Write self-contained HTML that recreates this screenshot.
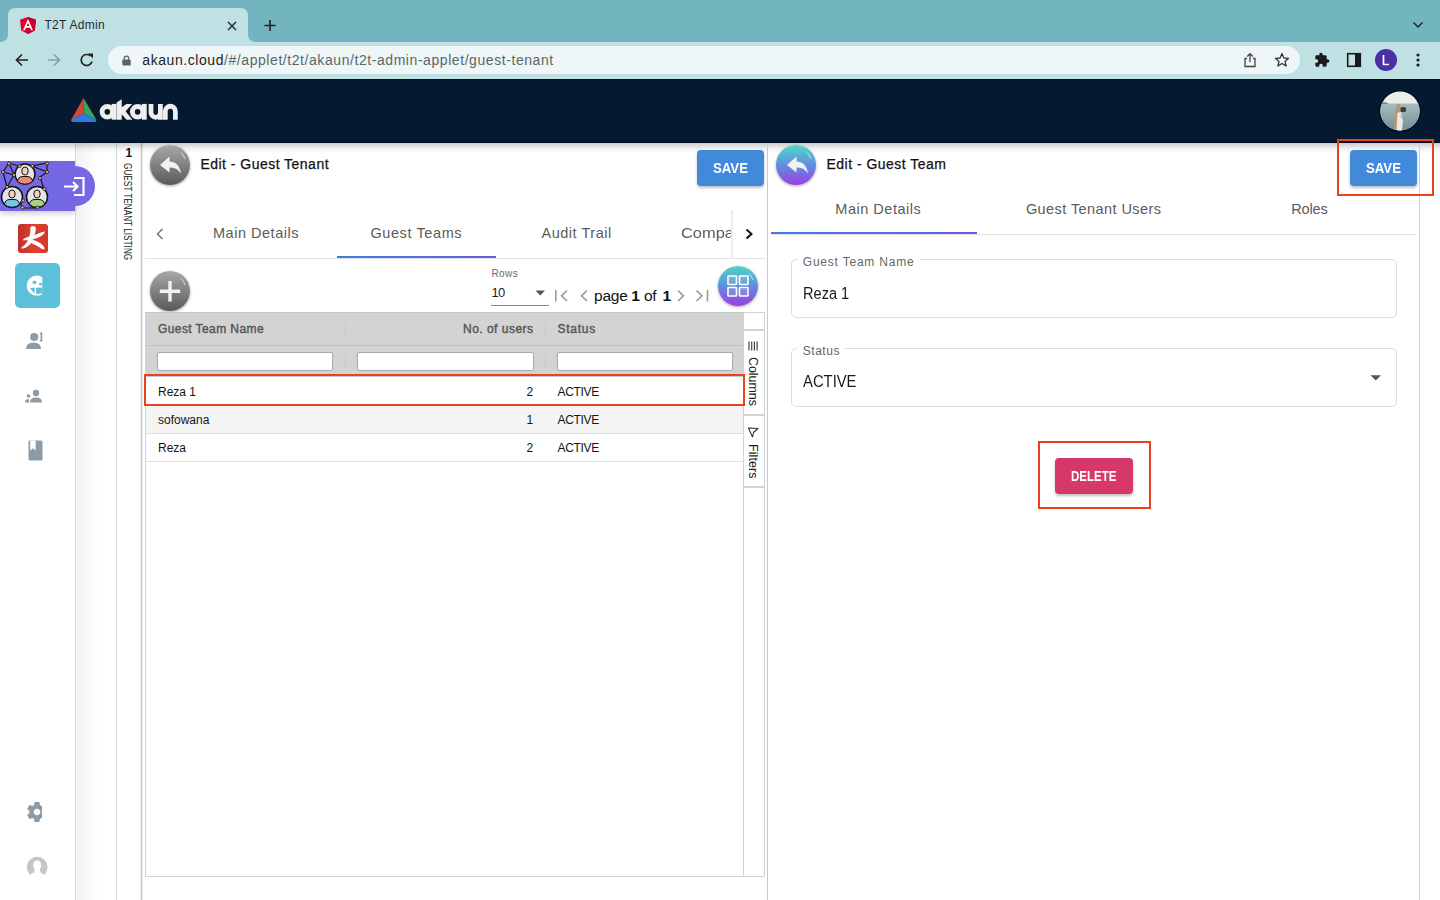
<!DOCTYPE html>
<html><head><meta charset="utf-8"><style>
*{box-sizing:border-box;margin:0;padding:0}
html,body{width:1440px;height:900px;overflow:hidden;background:#fff;font-family:"Liberation Sans",sans-serif;position:relative}
.a{position:absolute}
.t{position:absolute;white-space:nowrap;line-height:1}
svg{position:absolute;overflow:visible}
</style></head><body>
<div class="a" style="left:0;top:0;width:1440px;height:42px;background:#73b5be"></div>
<svg style="left:0;top:0" width="270" height="42"><path d="M0 42 Q8 42 8 34 L8 16 Q8 8 16 8 L240 8 Q248 8 248 16 L248 34 Q248 42 256 42 Z" fill="#bfe1e4"/></svg>
<div class="a" style="left:0;top:42px;width:1440px;height:37px;background:#bfe1e4"></div>
<svg style="left:20px;top:17px" width="16" height="17" viewBox="0 0 250 265"><path d="M125 0 L0 44 L19 209 L125 265 L231 209 L250 44 Z" fill="#dd0031"/><path d="M125 0 L125 265 L231 209 L250 44 Z" fill="#c3002f"/><path d="M125 30 L47 205 L76 205 L92 166 L158 166 L174 205 L203 205 Z M125 92 L148 142 L102 142 Z" fill="#fff"/></svg>
<div class="t" style="left:44.40px;top:19.14px;font-size:12px;color:#1f2a2c;letter-spacing:0.311px;">T2T Admin</div>

<svg style="left:227px;top:21px" width="10" height="10"><path d="M1 1 L9 9 M9 1 L1 9" stroke="#222" stroke-width="1.4"/></svg>
<svg style="left:263px;top:19px" width="14" height="13"><path d="M7 1 V12 M1.5 6.5 H12.5" stroke="#222" stroke-width="1.6"/></svg>
<svg style="left:1412px;top:21px" width="12" height="8"><path d="M1.5 1.5 L6 6 L10.5 1.5" stroke="#222" stroke-width="1.5" fill="none"/></svg>
<svg style="left:14px;top:52px" width="16" height="16"><path d="M14 8 H3 M8 2.5 L2.5 8 L8 13.5" stroke="#222" stroke-width="1.7" fill="none"/></svg>
<svg style="left:46px;top:52px" width="16" height="16"><path d="M2 8 H13 M8 2.5 L13.5 8 L8 13.5" stroke="#84a0a4" stroke-width="1.7" fill="none"/></svg>
<svg style="left:79px;top:52px" width="16" height="16"><path d="M13 9.5 A5.5 5.5 0 1 1 11.5 4" stroke="#222" stroke-width="1.7" fill="none"/><path d="M9 1.5 L14 1.5 L14 6.5 Z" fill="#222"/></svg>
<div class="a" style="left:108px;top:46px;width:1192px;height:28px;background:#eef6f7;border-radius:14px"></div>
<svg style="left:122px;top:55px" width="9" height="11"><path d="M2.3 4.8 V3.3 A2.2 2.2 0 0 1 6.7 3.3 V4.8" stroke="#5f6368" stroke-width="1.3" fill="none"/><rect x="0.3" y="4.6" width="8.4" height="6" rx="1" fill="#5f6368"/></svg>
<div class="t" style="left:142.3px;top:53.25px;font-size:14px;letter-spacing:0.566px"><span style="color:#1d2426">akaun.cloud</span><span style="color:#5c6668">/#/applet/t2t/akaun/t2t-admin-applet/guest-tenant</span></div>
<svg style="left:1243px;top:52px" width="14" height="16"><path d="M4 6.5 H2 V14.5 H12 V6.5 H10" stroke="#444" stroke-width="1.3" fill="none"/><path d="M7 10 V1.8 M4.2 4.5 L7 1.7 L9.8 4.5" stroke="#444" stroke-width="1.3" fill="none"/></svg>
<svg style="left:1274px;top:52px" width="16" height="16"><path d="M8 1.5 L9.9 6 L14.6 6.3 L11 9.4 L12.1 14 L8 11.5 L3.9 14 L5 9.4 L1.4 6.3 L6.1 6 Z" stroke="#333" stroke-width="1.3" fill="none" stroke-linejoin="round"/></svg>
<svg style="left:1314px;top:52px" width="16" height="16" viewBox="0 0 24 24"><path d="M20.5 11H19V7c0-1.1-.9-2-2-2h-4V3.5C13 2.12 11.88 1 10.5 1S8 2.12 8 3.5V5H4c-1.1 0-1.99.9-1.99 2v3.8H3.5c1.49 0 2.7 1.21 2.7 2.7s-1.21 2.7-2.7 2.7H2V20c0 1.1.9 2 2 2h3.8v-1.5c0-1.49 1.21-2.7 2.7-2.7 1.49 0 2.7 1.21 2.7 2.7V22H17c1.1 0 2-.9 2-2v-4h1.5c1.38 0 2.5-1.12 2.5-2.5S21.88 11 20.5 11z" fill="#1a1a1a"/></svg>
<svg style="left:1346px;top:52px" width="16" height="16"><rect x="1.7" y="1.7" width="12.6" height="12.6" stroke="#1a1a1a" stroke-width="1.6" fill="none"/><rect x="9" y="1.7" width="5.3" height="12.6" fill="#1a1a1a"/></svg>
<div class="a" style="left:1375px;top:49px;width:22px;height:22px;border-radius:50%;background:#4a2fa6"></div>
<svg style="left:1375px;top:49px" width="22" height="22"><path d="M8.5 6 V15.5 H14" stroke="#fff" stroke-width="1.7" fill="none"/></svg>
<svg style="left:1415px;top:52px" width="6" height="16"><circle cx="3" cy="3" r="1.6" fill="#1a1a1a"/><circle cx="3" cy="8" r="1.6" fill="#1a1a1a"/><circle cx="3" cy="13" r="1.6" fill="#1a1a1a"/></svg>
<div class="a" style="left:0;top:79px;width:1440px;height:64px;background:#051a31;border-top:1px solid #010d28;border-bottom:1px solid #000b26"></div>
<svg style="left:70px;top:97px" width="28" height="26" viewBox="0 0 28 26"><path d="M13.5 1 L13.5 16.5 L1 23 Z" fill="#d24a35"/><path d="M13.5 1 L26.5 23 L13.5 16.5 Z" fill="#3fa25a"/><path d="M1 23 L13.5 16.5 L26.5 23 Q26.5 25 24.5 25 L3 25 Q1 25 1 23 Z" fill="#2f7ae5"/></svg>
<svg style="left:96px;top:94px;filter:drop-shadow(0.8px 0.8px 0 #000)" width="90" height="32" viewBox="0 0 90 32"><g fill="none" stroke="#eeeeee"><ellipse cx="11.3" cy="17.8" rx="5.2" ry="5.3" stroke-width="4.9"/><path d="M18.1 9.9 V25.7" stroke-width="4.9"/><ellipse cx="41.6" cy="17.8" rx="5.2" ry="5.3" stroke-width="4.9"/><path d="M48.3 9.9 V25.7" stroke-width="4.9"/><path d="M55.0 9.9 V18.6 A4.7 4.7 0 0 0 64.4 18.6 M64.4 9.9 V25.7" stroke-width="4.8"/><path d="M69.3 25.7 V17.3 A5.05 5.05 0 0 1 79.4 17.3 V25.7" stroke-width="4.8"/></g><path d="M20.65 8.6 L25.75 5.2 L25.75 25.7 L20.65 25.7 Z M25.7 13.2 L30.4 9.9 L36.2 9.9 L29.6 17.2 L36.4 25.7 L30.6 25.7 L25.7 20.6 Z" fill="#eeeeee"/></svg>
<div class="a" style="left:1379px;top:90px;width:42px;height:42px;border-radius:50%;background:#02101e"></div>
<svg style="left:1380px;top:91px" width="40" height="40" viewBox="0 0 40 40"><defs><clipPath id="av"><circle cx="20" cy="20" r="19.6"/></clipPath><linearGradient id="sea" x1="0" y1="0" x2="0" y2="1"><stop offset="0" stop-color="#a9bcbd"/><stop offset="1" stop-color="#6f8f92"/></linearGradient></defs><g clip-path="url(#av)"><rect width="40" height="40" fill="#eceee9"/><rect y="12.5" width="40" height="28" fill="url(#sea)"/><path d="M0 12.5 Q4 10.5 9 12.5 Z" fill="#2e3a36"/><path d="M15.5 17 Q16 12.5 19.5 12.8 Q21 14 20.5 18 L19 40 L14.5 40 Q13.5 30 15.5 17Z" fill="#b49a72"/><path d="M17.5 22 L21 21 L23 30 L22 40 L16.5 40 Z" fill="#e9e8e2"/><rect x="20.5" y="16" width="5.5" height="5" rx="1.5" fill="#3b4244"/><path d="M21 21 Q23.5 22 22.5 27 L20.5 27Z" fill="#d8b79a"/></g></svg>
<div class="a" style="left:76px;top:143px;width:40px;height:757px;background:linear-gradient(90deg,#f3f3f3,#fafafa 35%,#fff 58%)"></div>
<div class="a" style="left:75px;top:143px;width:1px;height:757px;background:#dcdcdc"></div>
<div class="a" style="left:116px;top:143px;width:1px;height:757px;background:#d8d8d8"></div>
<div class="a" style="left:140px;top:143px;width:3px;height:757px;background:linear-gradient(90deg,#f2f2f2 0,#f2f2f2 33%,#c8c8c8 33%,#c8c8c8 66%,#e8e8e8 66%)"></div>
<div class="a" style="left:0;top:143px;width:1440px;height:10px;background:linear-gradient(rgba(0,0,0,0.20),rgba(0,0,0,0.05) 60%,rgba(0,0,0,0))"></div>
<div class="a" style="left:0;top:161px;width:75px;height:50px;background:#7468e4;box-shadow:0 3px 5px rgba(0,0,0,0.18)"></div>
<div class="a" style="left:55px;top:166px;width:40px;height:40px;border-radius:50%;background:#7468e4"></div>
<svg style="left:60px;top:172px" width="28" height="28"><path d="M14 6 H23.5 V23 H14" stroke="#fff" stroke-width="2.2" fill="none"/><path d="M4 14.5 H17.5 M13 10 L17.5 14.5 L13 19" stroke="#fff" stroke-width="2.2" fill="none"/></svg>
<svg style="left:0;top:161px" width="50" height="50" viewBox="0 0 50 50">
<g stroke="#111" stroke-width="1.1" fill="none">
<path d="M9 2 L3 11 L14 14 L9 2 L19 5 M3 11 L7 26 L14 14 M32 5 L47 2 L47 11 L32 5 M47 11 L40 16 L44 28 M22 47 L37 47 M22 47 L20 40"/>
</g>
<circle cx="25" cy="13" r="10" fill="#e4e4e8" stroke="#111" stroke-width="1.5"/>
<path d="M17.5 20.5 Q18 15.5 23 15.5 L27 15.5 Q32 15.5 32.5 20.5 Q29.5 23.2 25 23.2 Q20.5 23.2 17.5 20.5Z" fill="#ef8a72" stroke="#111" stroke-width="1"/>
<ellipse cx="25" cy="10" rx="3.2" ry="4" fill="#f2d2b6" stroke="#111" stroke-width="1"/>
<circle cx="12" cy="36" r="10.5" fill="#e4e4e8" stroke="#111" stroke-width="1.5"/>
<path d="M4.5 43.5 Q5 38.5 10 38.5 L14 38.5 Q19 38.5 19.5 43.5 Q16.5 46.3 12 46.3 Q7.5 46.3 4.5 43.5Z" fill="#6fc8ea" stroke="#111" stroke-width="1"/>
<ellipse cx="12" cy="33" rx="3.2" ry="4" fill="#f2d2b6" stroke="#111" stroke-width="1"/>
<circle cx="37" cy="36" r="10.5" fill="#e4e4e8" stroke="#111" stroke-width="1.5"/>
<path d="M29.5 43.5 Q30 38.5 35 38.5 L39 38.5 Q44 38.5 44.5 43.5 Q41.5 46.3 37 46.3 Q32.5 46.3 29.5 43.5Z" fill="#a6d47d" stroke="#111" stroke-width="1"/>
<ellipse cx="37" cy="33" rx="3.2" ry="4" fill="#f2d2b6" stroke="#111" stroke-width="1"/>
<g fill="#d9b35a" stroke="#111" stroke-width="0.7">
<circle cx="9" cy="2.5" r="1.6"/><circle cx="3" cy="11" r="1.6"/><circle cx="14" cy="14" r="1.6"/><circle cx="19.5" cy="5" r="1.6"/><circle cx="32.5" cy="5" r="1.6"/><circle cx="47" cy="2.5" r="1.6"/><circle cx="47" cy="11" r="1.6"/><circle cx="40" cy="17" r="1.6"/><circle cx="7" cy="26" r="1.6"/><circle cx="44.5" cy="28" r="1.6"/><circle cx="22.5" cy="46.5" r="1.6"/><circle cx="37.5" cy="46.5" r="1.6"/><circle cx="23" cy="39.5" r="1.6"/>
</g></svg>
<div class="a" style="left:18px;top:224px;width:30px;height:29px;border-radius:3px;background:linear-gradient(90deg,#c22e2a,#dd4030 50%,#d03a2c)"></div>
<svg style="left:18px;top:224px" width="30" height="29" viewBox="0 0 30 29"><path d="M12.2 4 C13 1 18.5 1.2 17.8 5.5 C17.2 9.5 16.2 13.5 14.2 17.2 C12 21.5 7.5 24.6 3.5 24.6 C2.8 24 3.6 23 5 22.2 C8 20.2 10.2 17 11.2 13 C12.2 9.5 12.8 6.5 12.2 4 Z" fill="#fff"/><path d="M4.2 16.2 C7 13.2 12 12.2 16 11.2 C20 10 23.5 8 27 7.5 C26.5 10.5 22.5 12.8 18.5 14.2 C14 15.6 8.5 16.5 4.2 16.2 Z" fill="#fff"/><path d="M12.8 15.8 C17.5 16 21.5 18.2 24.5 21 C25.8 22.3 27 24.2 26.4 25.6 C24.2 25.4 22 23.6 19.5 22.2 C17 20.8 14.5 19.6 12 18.8 Z" fill="#fff"/></svg>
<div class="a" style="left:15px;top:263px;width:45px;height:45px;border-radius:5px;background:#5cc1d8"></div>
<svg style="left:24px;top:274px" width="22" height="24" viewBox="0 0 22 24"><defs><clipPath id="cb"><rect x="0" y="0" width="18.3" height="24"/></clipPath></defs><g clip-path="url(#cb)"><circle cx="12.8" cy="11.7" r="10.1" fill="#fff"/></g><circle cx="10.5" cy="8.3" r="1.9" fill="#5cc1d8"/><circle cx="16.5" cy="10.2" r="1.4" fill="#5cc1d8"/><path d="M6 14.2 L11 13.4 L10.2 19.5 Z" fill="#5cc1d8"/><path d="M12 13.7 L18.4 13.5 L18.4 19.6 Q14.8 19.4 12.3 20.4 Z" fill="#5cc1d8"/></svg>
<svg style="left:25px;top:332px" width="18" height="18" viewBox="0 0 18 18"><circle cx="9.2" cy="5" r="4.1" fill="#8d9ba6"/><path d="M1 17 Q1 10.5 8.5 10.5 Q16 10.5 16 17 Z" fill="#8d9ba6"/><path d="M14.8 1.2 H16.4 V8.8 H14.8" stroke="#8d9ba6" stroke-width="1.6" fill="none"/></svg>
<svg style="left:24px;top:389px" width="19" height="14" viewBox="0 0 19 14"><circle cx="12" cy="4" r="3.2" fill="#8d9ba6"/><path d="M6 13.5 Q6 8.5 12 8.5 Q18 8.5 18 13.5 Z" fill="#8d9ba6"/><circle cx="4.5" cy="7" r="1.8" fill="#8d9ba6"/><path d="M1 13.5 Q1 10 4.5 10 Q5.5 10 5 13.5 Z" fill="#8d9ba6"/></svg>
<svg style="left:28px;top:440px" width="15" height="21" viewBox="0 0 15 21"><rect x="0.5" y="0.5" width="14" height="20" rx="1.5" fill="#8d9ba6"/><path d="M2.2 0.5 V10.5 L4.9 8.3 L7.6 10.5 V0.5 Z" fill="#fff"/></svg>
<svg style="left:27px;top:802.3px;overflow:hidden" width="15.1" height="20" viewBox="0 0 15.1 20"><g transform="translate(-2.58 -2.58) scale(1.048)"><path d="M19.14 12.94c.04-.3.06-.61.06-.94 0-.32-.02-.64-.07-.94l2.03-1.58a.49.49 0 0 0 .12-.61l-1.92-3.32a.49.49 0 0 0-.59-.22l-2.39.96c-.5-.38-1.03-.7-1.62-.94l-.36-2.540a.48.48 0 0 0-.48-.41h-3.840c-.24 0-.43.17-.47.41l-.36 2.540c-.59.24-1.130.57-1.62.94l-2.39-.96a.49.49 0 0 0-.59.22L2.74 8.87c-.12.21-.08.47.12.61l2.03 1.58c-.05.3-.09.63-.09.94s.02.64.07.94l-2.03 1.58a.49.49 0 0 0-.12.61l1.92 3.32c.12.22.37.29.59.22l2.39-.96c.5.38 1.03.7 1.62.94l.36 2.54c.05.24.24.41.48.41h3.84c.24 0 .44-.17.47-.41l.36-2.54c.59-.24 1.13-.56 1.62-.94l2.39.96c.22.08.47 0 .59-.22l1.92-3.32c.12-.22.07-.47-.12-.61l-2.01-1.58zM12 15.2c-1.76 0-3.2-1.44-3.2-3.2s1.44-3.2 3.2-3.2 3.2 1.44 3.2 3.2-1.44 3.2-3.2 3.2z" fill="#8d9ba6"/></g></svg>
<svg style="left:26px;top:856px;overflow:hidden" width="22" height="18.5" viewBox="0 0 22 18.5"><circle cx="11.2" cy="11.2" r="10.4" fill="#c6c6c6"/><ellipse cx="11.2" cy="9.2" rx="4" ry="4.8" fill="#fff"/><path d="M8.6 12 L13.8 12 Q13.2 15 15.5 16.5 L7 16.5 Q9.2 15 8.6 12 Z" fill="#fff"/><ellipse cx="11.2" cy="22.8" rx="8.3" ry="6.8" fill="#fff"/></svg>
<div class="t" style="left:125.5px;top:147.24px;font-size:12px;font-weight:bold;color:#111">1</div>
<div class="t" style="left:132.5px;top:163px;font-size:10.5px;color:#222;transform-origin:0 0;transform:rotate(90deg) scaleX(0.7821)">GUEST TENANT LISTING</div>
<div class="a" style="left:150px;top:145px;width:40px;height:40px;border-radius:50%;background:linear-gradient(#a8a8a8,#5a5a5a);box-shadow:0 1px 3px rgba(0,0,0,0.35)"></div>
<svg style="left:150px;top:145px" width="40" height="40" viewBox="0 0 40 40"><path d="M31 7.5 A16.5 16.5 0 0 1 35 14" stroke="rgba(255,255,255,0.75)" stroke-width="0.9" fill="none"/></svg>
<svg style="left:150px;top:145px" width="40" height="40" viewBox="0 0 40 40"><path d="M10 20 L19.5 11.5 L19.5 16.5 Q29 16.5 31 28.5 Q27 22 19.5 22.5 L19.5 27.5 Z" fill="#f2f2f2"/></svg>
<div class="t" style="left:200.40px;top:157.45px;font-size:14px;color:#111;letter-spacing:0.475px;-webkit-text-stroke:0.25px #111;">Edit - Guest Tenant</div>

<div class="a" style="left:697px;top:150px;width:67px;height:36px;border-radius:4px;background:#4289dc;box-shadow:0 2px 3px rgba(0,0,0,0.25)"></div>
<div class="t" style="left:713.00px;top:160.73px;font-size:14.5px;color:#fff;font-weight:bold;transform:scaleX(0.9112);transform-origin:0 0;">SAVE</div>

<svg style="left:155px;top:227px" width="10" height="14"><path d="M7.5 2 L2.5 7 L7.5 12" stroke="#777" stroke-width="1.6" fill="none"/></svg>
<div class="t" style="left:213.00px;top:226.13px;font-size:14.5px;color:#5b5b5b;letter-spacing:0.518px;">Main Details</div>

<div class="t" style="left:370.40px;top:226.13px;font-size:14.5px;color:#5b5b5b;letter-spacing:0.604px;">Guest Teams</div>

<div class="t" style="left:541.50px;top:226.13px;font-size:14.5px;color:#5b5b5b;letter-spacing:0.521px;">Audit Trail</div>

<div class="a" style="left:660px;top:210px;width:72px;height:45px;overflow:hidden"><div class="t" style="left:20.80px;top:16.13px;font-size:14.5px;color:#5b5b5b;transform:scaleX(1.1339);transform-origin:0 0;">Compa</div>
</div>
<div class="a" style="left:731px;top:210px;width:3px;height:48px;background:linear-gradient(90deg,#e6e6e6,#fff)"></div>
<svg style="left:743px;top:227px" width="12" height="14"><path d="M3.5 2.5 L8.5 7 L3.5 11.5" stroke="#111" stroke-width="2" fill="none"/></svg>
<div class="a" style="left:145px;top:258px;width:620px;height:1px;background:#e2e2e2"></div>
<div class="a" style="left:337px;top:256px;width:159px;height:2px;background:linear-gradient(90deg,#3f7fdc,#6a5be2)"></div>
<div class="a" style="left:150px;top:271px;width:40px;height:40px;border-radius:50%;background:linear-gradient(#a8a8a8,#5a5a5a);box-shadow:0 1px 3px rgba(0,0,0,0.35)"></div>
<svg style="left:150px;top:271px" width="40" height="40" viewBox="0 0 40 40"><path d="M31 7.5 A16.5 16.5 0 0 1 35 14" stroke="rgba(255,255,255,0.75)" stroke-width="0.9" fill="none"/></svg>
<svg style="left:150px;top:271px" width="40" height="40"><path d="M20 10 V30.5 M9.8 20.2 H30.2" stroke="#f2f2f2" stroke-width="3.4"/></svg>
<div class="t" style="left:491.50px;top:269.04px;font-size:10px;color:#6a6a6a;letter-spacing:0.374px;">Rows</div>

<div class="t" style="left:491.50px;top:285.80px;font-size:13px;color:#222;letter-spacing:-0.730px;">10</div>

<svg style="left:535px;top:290px" width="11" height="6"><path d="M0.5 0.5 H10 L5.25 5.5 Z" fill="#555"/></svg>
<div class="a" style="left:491px;top:304.5px;width:58px;height:1px;background:#8a8a8a"></div>
<svg style="left:554px;top:288px" width="16" height="16"><path d="M1.8 2 V13.5" stroke="#9a9a9a" stroke-width="1.6"/><path d="M13 2.5 L7.5 7.8 L13 13" stroke="#9a9a9a" stroke-width="1.6" fill="none"/></svg>
<svg style="left:578px;top:288px" width="12" height="16"><path d="M9 2.5 L3.5 7.8 L9 13" stroke="#9a9a9a" stroke-width="1.6" fill="none"/></svg>
<div class="t" style="left:594.00px;top:288.38px;font-size:15.5px;color:#111;letter-spacing:-0.195px;">page</div>

<div class="t" style="left:631.30px;top:288.38px;font-size:15.5px;color:#111;font-weight:bold;letter-spacing:-2.620px;">1</div>

<div class="t" style="left:644.00px;top:288.38px;font-size:15.5px;color:#111;letter-spacing:-0.363px;">of</div>

<div class="t" style="left:662.50px;top:288.38px;font-size:15.5px;color:#111;font-weight:bold;letter-spacing:-2.620px;">1</div>

<svg style="left:675px;top:288px" width="12" height="16"><path d="M3 2.5 L8.5 7.8 L3 13" stroke="#9a9a9a" stroke-width="1.6" fill="none"/></svg>
<svg style="left:694px;top:288px" width="16" height="16"><path d="M2.5 2.5 L8 7.8 L2.5 13" stroke="#9a9a9a" stroke-width="1.6" fill="none"/><path d="M13.5 2 V13.5" stroke="#9a9a9a" stroke-width="1.6"/></svg>
<div class="a" style="left:718px;top:266px;width:40px;height:40px;border-radius:50%;background:linear-gradient(#4fd6c4,#5f8de0 50%,#9b3fe0);box-shadow:0 1px 3px rgba(0,0,0,0.35)"></div>
<svg style="left:718px;top:266px" width="40" height="40" viewBox="0 0 40 40"><path d="M31 7.5 A16.5 16.5 0 0 1 35 14" stroke="rgba(255,255,255,0.75)" stroke-width="0.9" fill="none"/></svg>
<svg style="left:718px;top:266px" width="40" height="40"><g stroke="#fff" stroke-width="1.6" fill="rgba(255,255,255,0.12)"><rect x="10" y="10" width="8.5" height="8.5" rx="0.5"/><rect x="21.5" y="10" width="8.5" height="8.5" rx="0.5"/><rect x="10" y="21.5" width="8.5" height="8.5" rx="0.5"/><rect x="21.5" y="21.5" width="8.5" height="8.5" rx="0.5"/></g></svg>
<div class="a" style="left:145px;top:312px;width:620px;height:565px;border:1px solid #cfd4d8;border-top:none"></div>
<div class="a" style="left:146px;top:312px;width:597px;height:64px;background:#d3d3d3"></div>
<div class="a" style="left:146px;top:345px;width:597px;height:1px;background:#bcc3c8"></div>
<div class="a" style="left:145px;top:312px;width:598px;height:1px;background:#bfc5c9"></div>
<div class="a" style="left:345px;top:322px;width:1px;height:16px;background:#c4c8cb"></div>
<div class="a" style="left:345px;top:354px;width:1px;height:14px;background:#c4c8cb"></div>
<div class="a" style="left:545px;top:322px;width:1px;height:16px;background:#c4c8cb"></div>
<div class="a" style="left:545px;top:354px;width:1px;height:14px;background:#c4c8cb"></div>
<div class="a" style="left:157.3px;top:352px;width:176.1px;height:18.5px;background:#fff;border:1px solid #a3abb0;border-radius:2px"></div>
<div class="a" style="left:357.2px;top:352px;width:176.6px;height:18.5px;background:#fff;border:1px solid #a3abb0;border-radius:2px"></div>
<div class="a" style="left:557.2px;top:352px;width:176.3px;height:18.5px;background:#fff;border:1px solid #a3abb0;border-radius:2px"></div>
<div class="t" style="left:158.00px;top:323.24px;font-size:12px;color:#585858;letter-spacing:0.412px;-webkit-text-stroke:0.45px #585858;">Guest Team Name</div>

<div class="t" style="left:463.00px;top:323.24px;font-size:12px;color:#585858;letter-spacing:0.484px;-webkit-text-stroke:0.45px #585858;">No. of users</div>

<div class="t" style="left:557.60px;top:323.24px;font-size:12px;color:#585858;letter-spacing:0.713px;-webkit-text-stroke:0.45px #585858;">Status</div>

<div class="a" style="left:146px;top:376px;width:597px;height:29px;background:#fff"></div>
<div class="a" style="left:146px;top:405px;width:597px;height:28px;background:#f4f4f4"></div>
<div class="a" style="left:146px;top:376px;width:597px;height:1px;background:#c3c9cd"></div>
<div class="a" style="left:146px;top:405px;width:597px;height:1px;background:#dde1e4"></div>
<div class="a" style="left:146px;top:433px;width:597px;height:1px;background:#dde1e4"></div>
<div class="a" style="left:146px;top:461px;width:597px;height:1px;background:#dde1e4"></div>
<div class="t" style="left:158.00px;top:386.04px;font-size:12px;color:#141414;">Reza 1</div>

<div class="t" style="left:526.53px;top:386.04px;font-size:12px;color:#141414;">2</div>

<div class="t" style="left:557.60px;top:386.04px;font-size:12px;color:#141414;letter-spacing:-0.357px;">ACTIVE</div>

<div class="t" style="left:158.00px;top:414.04px;font-size:12px;color:#141414;">sofowana</div>

<div class="t" style="left:526.53px;top:414.04px;font-size:12px;color:#141414;">1</div>

<div class="t" style="left:557.60px;top:414.04px;font-size:12px;color:#141414;letter-spacing:-0.357px;">ACTIVE</div>

<div class="t" style="left:158.00px;top:442.04px;font-size:12px;color:#141414;">Reza</div>

<div class="t" style="left:526.53px;top:442.04px;font-size:12px;color:#141414;">2</div>

<div class="t" style="left:557.60px;top:442.04px;font-size:12px;color:#141414;letter-spacing:-0.357px;">ACTIVE</div>

<div class="a" style="left:743px;top:312px;width:22px;height:564px;background:#fff;border-left:1px solid #cfd4d8;border-right:1px solid #cfd4d8"></div>
<div class="a" style="left:743px;top:312px;width:22px;height:1px;background:#cfd4d8"></div>
<div class="a" style="left:743px;top:329px;width:22px;height:1.5px;background:#cfd4d8"></div>
<div class="a" style="left:743px;top:414px;width:22px;height:1.5px;background:#cfd4d8"></div>
<div class="a" style="left:743px;top:486px;width:22px;height:1.5px;background:#cfd4d8"></div>
<svg style="left:748px;top:341px" width="11" height="10"><g stroke="#444" stroke-width="1.2"><path d="M1 0.5 V9.5 M3.7 0.5 V9.5 M6.4 0.5 V9.5 M9.1 0.5 V9.5"/></g></svg>
<div class="t" style="left:759px;top:357px;font-size:12.5px;color:#1a1a1a;transform-origin:0 0;transform:rotate(90deg);letter-spacing:-0.074px">Columns</div>
<svg style="left:747px;top:426px" width="12" height="12"><path d="M1.5 2 L11 2.5 L6.5 6.5 L5.5 11 Z" stroke="#333" stroke-width="1.1" fill="none" stroke-linejoin="round"/></svg>
<div class="t" style="left:759px;top:443.7px;font-size:12.5px;color:#1a1a1a;transform-origin:0 0;transform:rotate(90deg);letter-spacing:0.082px">Filters</div>
<div class="a" style="left:144px;top:374px;width:601px;height:32px;border:2.5px solid #e8421f"></div>
<div class="a" style="left:767px;top:143px;width:1px;height:757px;background:#c9c9c9"></div>
<div class="a" style="left:776px;top:145px;width:40px;height:40px;border-radius:50%;background:linear-gradient(#52d8c6,#5f8fe0 50%,#9c40e0);box-shadow:0 1px 3px rgba(0,0,0,0.35)"></div>
<svg style="left:776px;top:145px" width="40" height="40" viewBox="0 0 40 40"><path d="M31 7.5 A16.5 16.5 0 0 1 35 14" stroke="rgba(255,255,255,0.75)" stroke-width="0.9" fill="none"/></svg>
<svg style="left:776.5px;top:145px" width="40" height="40" viewBox="0 0 40 40"><path d="M10 20 L19.5 11.5 L19.5 16.5 Q29 16.5 31 28.5 Q27 22 19.5 22.5 L19.5 27.5 Z" fill="#f2f2f2"/></svg>
<div class="t" style="left:826.50px;top:157.45px;font-size:14px;color:#111;letter-spacing:0.483px;-webkit-text-stroke:0.25px #111;">Edit - Guest Team</div>

<div class="a" style="left:1350px;top:150px;width:67px;height:36px;border-radius:4px;background:#4289dc;box-shadow:0 2px 3px rgba(0,0,0,0.25)"></div>
<div class="t" style="left:1365.80px;top:160.73px;font-size:14.5px;color:#fff;font-weight:bold;transform:scaleX(0.9112);transform-origin:0 0;">SAVE</div>

<div class="t" style="left:835.30px;top:202.23px;font-size:14.5px;color:#5b5b5b;letter-spacing:0.518px;">Main Details</div>

<div class="t" style="left:1025.90px;top:202.23px;font-size:14.5px;color:#5b5b5b;letter-spacing:0.424px;">Guest Tenant Users</div>

<div class="t" style="left:1291.20px;top:202.23px;font-size:14.5px;color:#5b5b5b;letter-spacing:-0.154px;">Roles</div>

<div class="a" style="left:771px;top:234px;width:646px;height:1px;background:#e2e2e2"></div>
<div class="a" style="left:771px;top:231.5px;width:206px;height:2.5px;background:linear-gradient(90deg,#3f7fdc,#6a5be2)"></div>
<div class="a" style="left:790.6px;top:259.0px;width:606px;height:59.0px;border:1px solid #dcdcdc;border-radius:5px"></div>
<div class="a" style="left:797px;top:258.0px;width:123.0px;height:3px;background:#fff"></div>
<div class="t" style="left:802.80px;top:255.94px;font-size:12px;color:#666;letter-spacing:0.785px;">Guest Team Name</div>

<div class="t" style="left:802.80px;top:285.76px;font-size:16px;color:#1a1a1a;transform:scaleX(0.9113);transform-origin:0 0;">Reza 1</div>

<div class="a" style="left:790.6px;top:348.3px;width:606px;height:58.7px;border:1px solid #dcdcdc;border-radius:5px"></div>
<div class="a" style="left:797px;top:347.3px;width:48.0px;height:3px;background:#fff"></div>
<div class="t" style="left:802.80px;top:344.74px;font-size:12px;color:#666;letter-spacing:0.513px;">Status</div>

<div class="t" style="left:802.80px;top:374.46px;font-size:16px;color:#1a1a1a;transform:scaleX(0.9258);transform-origin:0 0;">ACTIVE</div>

<svg style="left:1370px;top:375px" width="12" height="6"><path d="M0.5 0.3 H11 L5.75 5.5 Z" fill="#555"/></svg>
<div class="a" style="left:1055px;top:458px;width:78px;height:36px;border-radius:4px;background:#d6386a;box-shadow:0 2px 3px rgba(0,0,0,0.25)"></div>
<div class="t" style="left:1070.90px;top:469.25px;font-size:14px;color:#fff;font-weight:bold;transform:scaleX(0.8239);transform-origin:0 0;">DELETE</div>

<div class="a" style="left:1038px;top:441px;width:113px;height:68px;border:2.2px solid #e8421f"></div>
<div class="a" style="left:1419px;top:143px;width:1px;height:757px;background:#d0d0d0"></div>
<div class="a" style="left:1337px;top:139px;width:97px;height:57px;border:2.5px solid #e8421f"></div>
</body></html>
